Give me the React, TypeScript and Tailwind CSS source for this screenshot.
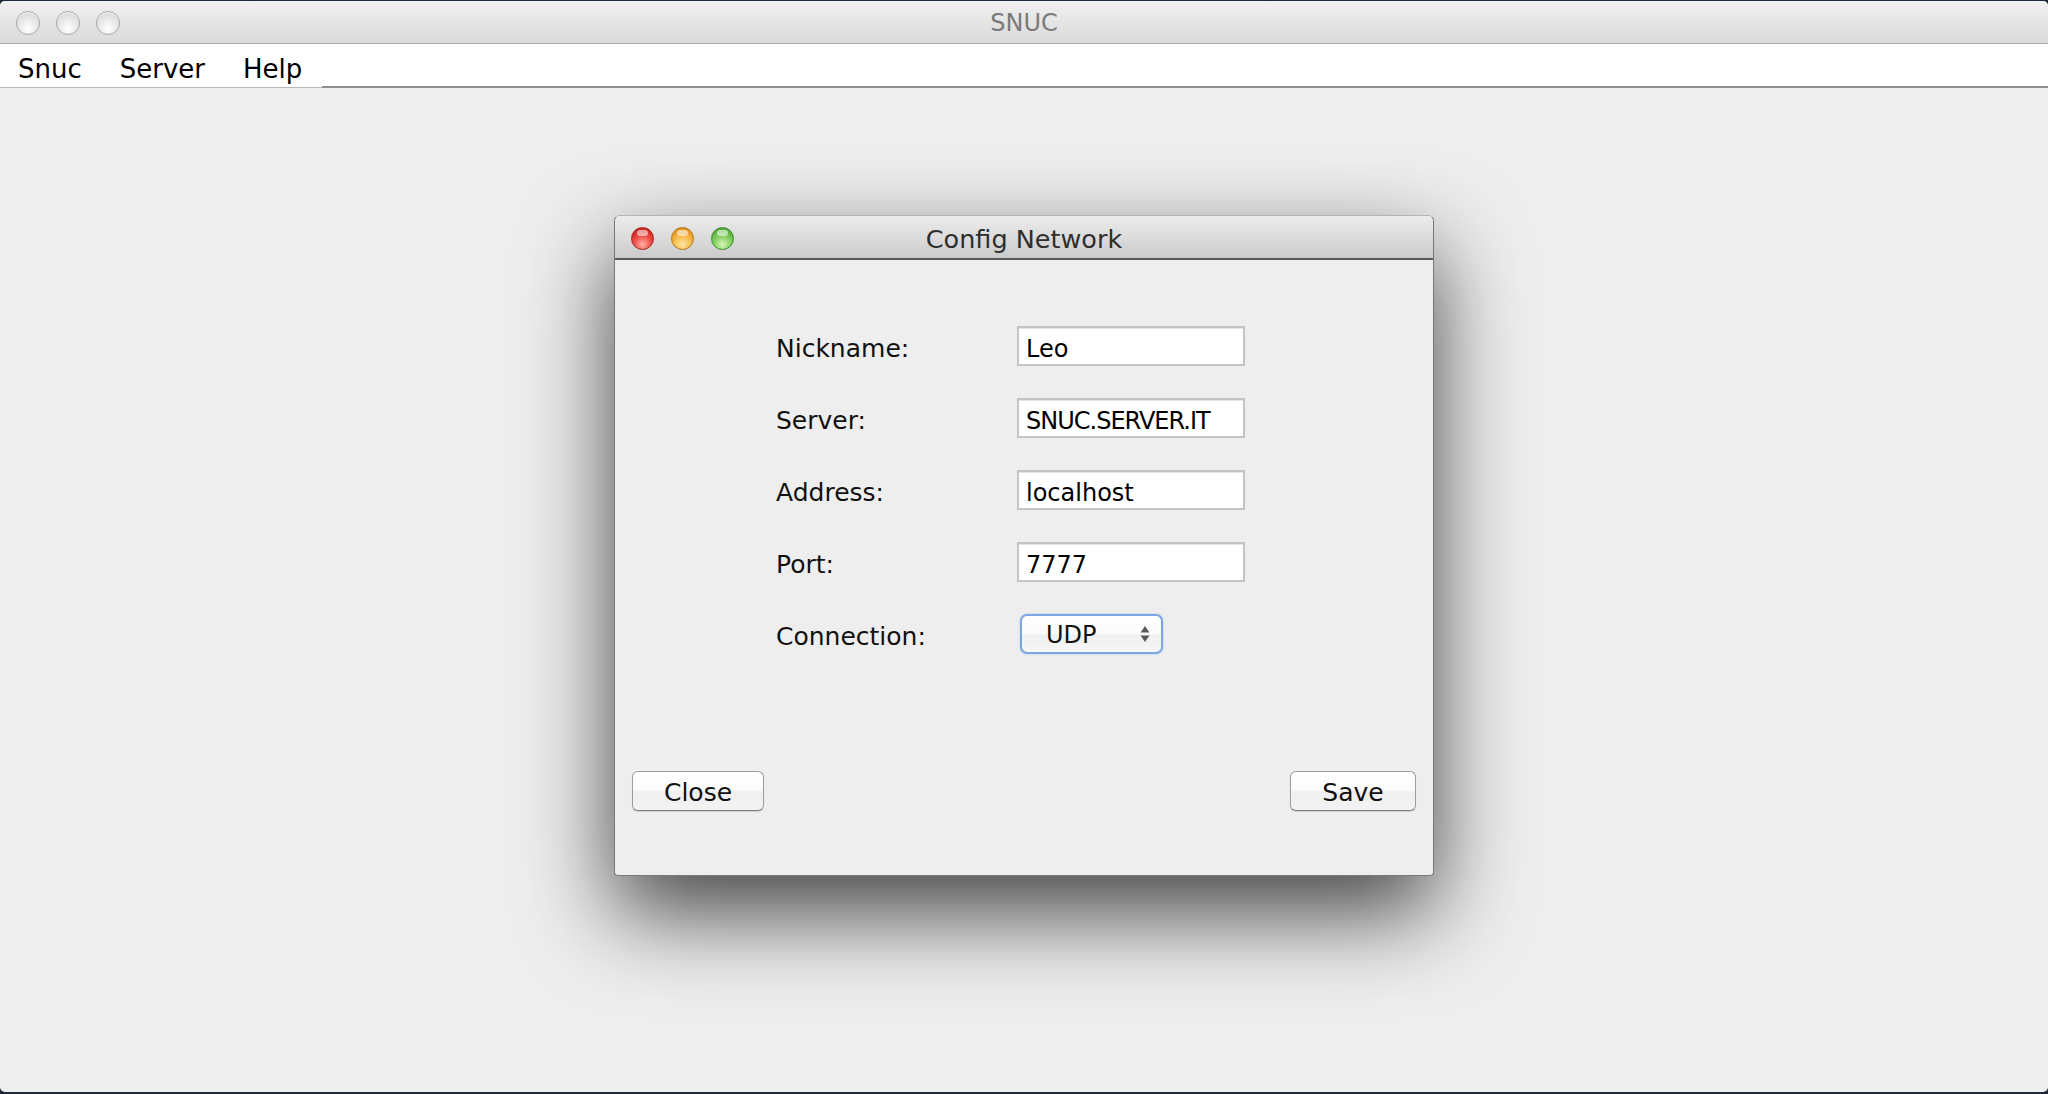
import React from "react";

function GrayLight() {
  return (
    <div className="w-[24px] h-[24px] rounded-full border border-[#a9a9a9] bg-[radial-gradient(circle_at_50%_75%,#ffffff_0%,#eaeaea_45%,#cfcfcf_100%)] shadow-[inset_0_1px_1px_rgba(255,255,255,0.9)]" />
  );
}

function ColorLight({ kind }: { kind: "red" | "orange" | "green" }) {
  const cls =
    kind === "red"
      ? "border-[#a5231f] bg-[radial-gradient(circle_at_50%_78%,#ffb4a9_0%,#f0514a_42%,#cf2a24_75%,#b01d19_100%)]"
      : kind === "orange"
      ? "border-[#b07718] bg-[radial-gradient(circle_at_50%_78%,#ffe6a3_0%,#f7bd4f_42%,#e59a26_75%,#c9801b_100%)]"
      : "border-[#3f8b2a] bg-[radial-gradient(circle_at_50%_78%,#d8f7b8_0%,#86d163_42%,#5cb03f_75%,#428f2c_100%)]";
  return (
    <div className={`relative w-[23px] h-[23px] rounded-full border ${cls}`}>
      <div className="absolute left-[5px] top-[2px] w-[11px] h-[6px] rounded-full bg-[rgba(255,255,255,0.55)]" />
    </div>
  );
}

function Field({ value, tight }: { value: string; tight?: boolean }) {
  return (
    <div className="w-[228px] h-[40px] border-2 border-[#c4c4c4] bg-white shadow-[inset_0_1px_0_#e4e4e4] flex items-center pl-[7px] pt-[5px] overflow-hidden">
      <span className={`text-[24px] text-black whitespace-nowrap ${tight ? "tracking-[-1px]" : ""}`}>{value}</span>
    </div>
  );
}

function Label({ text }: { text: string }) {
  return <div className="text-[25px] text-[#111] pt-[6px]">{text}</div>;
}

function Button({ text, width }: { text: string; width: string }) {
  return (
    <div
      className={`${width} h-[40px] rounded-[6px] border border-[#9d9d9d] border-b-[#7d7d7d] bg-[linear-gradient(to_bottom,#ffffff_0%,#fafafa_48%,#efefef_52%,#f3f3f3_100%)] shadow-[0_1px_1px_rgba(0,0,0,0.12)] flex items-center justify-center pt-[3px] text-[25px] text-[#111]`}
    >
      {text}
    </div>
  );
}

export default function App() {
  return (
    <div className="w-[2048px] h-[1094px] bg-[#1e2937] pt-px pb-[2px] overflow-hidden font-['DejaVu_Sans',sans-serif]">
      <div className="h-full flex flex-col rounded-[5px] overflow-hidden bg-[#eeeeee]">
        {/* Window title bar */}
        <div className="h-[43px] shrink-0 grid grid-cols-[1fr_auto_1fr] items-center border-b border-[#a9a9a9] bg-[linear-gradient(to_bottom,#f0f0f0,#dadada)]">
          <div className="flex items-center gap-[16px] pl-[16px] pt-[2px]">
            <GrayLight />
            <GrayLight />
            <GrayLight />
          </div>
          <div className="text-[24px] text-[#7a7a7a] pt-[1px]">SNUC</div>
          <div />
        </div>
        {/* Menu bar */}
        <div className="h-[44px] shrink-0 flex bg-white">
          <div className="w-[322px] border-b border-[#b9b9b9] flex gap-[38px] pl-[18px] pt-[12px] text-[26px] leading-[26px] text-black">
            <span>Snuc</span>
            <span>Server</span>
            <span>Help</span>
          </div>
          <div className="flex-1 border-b-2 border-[#8e8e8e]" />
        </div>
        {/* Content */}
        <div className="flex-1 flex justify-center pt-[127px]">
          <div className="w-[820px] h-[661px] flex flex-col rounded-t-[6px] rounded-b-[4px] border border-[#777777] border-t-[#b5b5b5] bg-[#eeeeee] shadow-[0_36px_90px_rgba(0,0,0,0.72)] overflow-hidden">
            {/* Dialog title bar */}
            <div className="h-[44px] shrink-0 grid grid-cols-[1fr_auto_1fr] items-center border-b-2 border-[#595959] bg-[linear-gradient(to_bottom,#ececec,#cbcbcb)]">
              <div className="flex items-center gap-[17px] pl-[16px] pt-[2px]">
                <ColorLight kind="red" />
                <ColorLight kind="orange" />
                <ColorLight kind="green" />
              </div>
              <div className="text-[25.5px] text-[#2e2e2e] pt-[4px]">Config Network</div>
              <div />
            </div>
            {/* Form */}
            <div className="pt-[50px] pl-[161px] grid grid-cols-[241px_auto] auto-rows-[72px] items-center">
              <Label text="Nickname:" />
              <Field value="Leo" />
              <Label text="Server:" />
              <Field value="SNUC.SERVER.IT" tight />
              <Label text="Address:" />
              <Field value="localhost" />
              <Label text="Port:" />
              <Field value="7777" />
              <Label text="Connection:" />
              <div className="ml-[3px] w-[143px] h-[40px] rounded-[7px] border-2 border-[#7ba6e2] shadow-[0_0_2px_#9fc0ef] bg-[linear-gradient(to_bottom,#ffffff_0%,#fbfbfb_50%,#f0f0f0_52%,#f6f6f6_100%)] flex items-center justify-between pl-[24px] pr-[11px]">
                <span className="text-[24px] text-[#111] pt-[1px]">UDP</span>
                <svg width="10" height="20" viewBox="0 0 10 20">
                  <path d="M5 2 L9.5 8.5 L0.5 8.5 Z" fill="#5a5a5a" />
                  <path d="M5 18 L9.5 11.5 L0.5 11.5 Z" fill="#5a5a5a" />
                </svg>
              </div>
            </div>
            {/* Buttons */}
            <div className="mt-auto flex justify-between px-[17px] pb-[64px]">
              <Button text="Close" width="w-[132px]" />
              <Button text="Save" width="w-[126px]" />
            </div>
          </div>
        </div>
      </div>
    </div>
  );
}
